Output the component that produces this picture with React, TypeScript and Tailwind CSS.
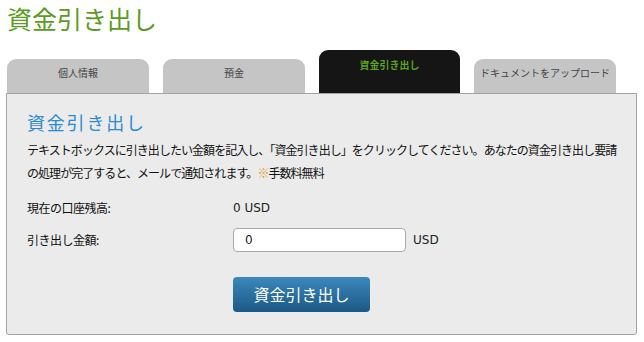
const jp = "font-['Noto_Sans_CJK_JP','Noto_Sans',sans-serif]"
const latin = "font-['DejaVu_Sans','Noto_Sans_CJK_JP',sans-serif]"

const tabs = [
  { label: "個人情報", active: false },
  { label: "預金", active: false },
  { label: "資金引き出し", active: true },
  { label: "ドキュメントをアップロード", active: false },
]

export default function App() {
  return (
    <div className={`w-[644px] h-[342px] bg-white pl-[6px] ${jp}`}>
      {/* Page title */}
      <div className="h-[50px] pl-[1px] pt-[1px]">
        <h1 className="text-[25px] leading-[34px] text-[#5b9c1e]">資金引き出し</h1>
      </div>

      {/* Tabs */}
      <div className="flex items-end gap-[14px] pl-[1px] h-[43px]">
        {tabs.map((tab) =>
          tab.active ? (
            <div
              key={tab.label}
              className="w-[141px] h-[43px] rounded-t-[9px] bg-[#151515] text-center pt-[8px] text-[10px] leading-[14px] font-bold text-[#5ba31c]"
            >
              {tab.label}
            </div>
          ) : (
            <div
              key={tab.label}
              className="w-[142px] h-[34px] rounded-t-[9px] bg-[#c5c5c5] text-center pt-[7px] text-[10px] leading-[14px] text-[#444]"
            >
              {tab.label}
            </div>
          )
        )}
      </div>

      {/* Panel */}
      <div className="w-[631px] h-[242px] border border-[#a3a3a3] rounded-b-[3px] bg-[#eaebea] px-[20px] pt-[16px]">
        <h2 className="text-[18px] leading-[24px] tracking-[1.8px] text-[#2a8ad2]">資金引き出し</h2>

        <p className="mt-[4px] text-[12px] leading-[23px] tracking-[-0.95px] text-[#111] whitespace-nowrap">
          テキストボックスに引き出したい金額を記入し、「資金引き出し」をクリックしてください。あなたの資金引き出し要請
          <br />
          の処理が完了すると、メールで通知されます。<span className="text-[#d9a21c]">※</span>手数料無料
        </p>

        <div className="mt-[12px] flex items-center h-[24px] text-[12px]">
          <span className="w-[206px] tracking-[-0.5px] text-[#111]">現在の口座残高:</span>
          <span className={`${latin} text-[12px] text-[#222]`}>0 USD</span>
        </div>

        <div className="mt-[8px] flex items-center h-[24px] text-[12px]">
          <span className="w-[206px] tracking-[-0.5px] text-[#111]">引き出し金額:</span>
          <input
            defaultValue="0"
            className={`${latin} w-[173px] h-[24px] rounded-[4px] border border-[#a9a9a9] bg-white pl-[11px] text-[12px] text-[#222] outline-none`}
          />
          <span className={`${latin} ml-[7px] text-[12px] text-[#222]`}>USD</span>
        </div>

        <div className="mt-[25px] pl-[206px]">
          <button className="w-[137px] h-[35px] rounded-[4px] bg-gradient-to-b from-[#3c88bc] to-[#1b5985] text-white text-[16px] leading-[35px]">
            資金引き出し
          </button>
        </div>
      </div>
    </div>
  )
}
